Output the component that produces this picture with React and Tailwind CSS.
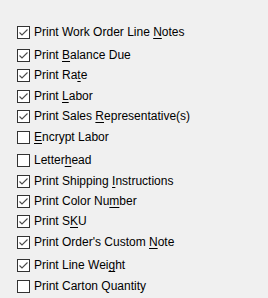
const ROWS = [
  { pre: 'Print Work Order Line ', u: 'N', post: 'otes', on: true, h: 'h-[23px]' },
  { pre: 'Print ', u: 'B', post: 'alance Due', on: true, h: 'h-[20px]' },
  { pre: 'Print Ra', u: 't', post: 'e', on: true, h: 'h-[21px]' },
  { pre: 'Print ', u: 'L', post: 'abor', on: true, h: 'h-[20px]' },
  { pre: 'Print Sales ', u: 'R', post: 'epresentative(s)', on: true, h: 'h-[21px]' },
  { pre: '', u: 'E', post: 'ncrypt Labor', on: false, h: 'h-[23px]' },
  { pre: 'Letter', u: 'h', post: 'ead', on: false, h: 'h-[21px]' },
  { pre: 'Print Shipping ', u: 'I', post: 'nstructions', on: true, h: 'h-[20px]' },
  { pre: 'Print Color Nu', u: 'm', post: 'ber', on: true, h: 'h-[20px]' },
  { pre: 'Print S', u: 'K', post: 'U', on: true, h: 'h-[21px]' },
  { pre: "Print Order's Custom ", u: 'N', post: 'ote', on: true, h: 'h-[23px]' },
  { pre: 'Print Line Wei', u: 'g', post: 'ht', on: true, h: 'h-[21px]' },
  { pre: 'Print Carton Quantity', u: '', post: '', on: false, h: 'h-[18px]' },
]

function Box({ on }) {
  return (
    <div className="w-[13px] h-[13px] border border-[#333333] bg-white flex-shrink-0 flex items-center justify-center">
      {on && (
        <svg width="11" height="11" viewBox="0 0 11 11" fill="none" stroke="#4a4a4a" strokeWidth="1.1">
          <path d="M1.5 5.5 L4 8 L9.5 2.5" />
        </svg>
      )}
    </div>
  )
}

export default function App() {
  return (
    <div
      className="w-[268px] h-[298px] bg-[#f0f0f0] pt-[26px] pl-[17px] text-[12px] text-black"
      style={{ fontFamily: '"Segoe UI", "Liberation Sans", Arial, sans-serif' }}
    >
      {ROWS.map((r, i) => (
        <div key={i} className={`flex items-start ${r.h}`}>
          <Box on={r.on} />
          <span className="ml-[4px] leading-[13px] whitespace-nowrap">
            {r.pre}
            {r.u && <span className="underline underline-offset-2">{r.u}</span>}
            {r.post}
          </span>
        </div>
      ))}
    </div>
  )
}
